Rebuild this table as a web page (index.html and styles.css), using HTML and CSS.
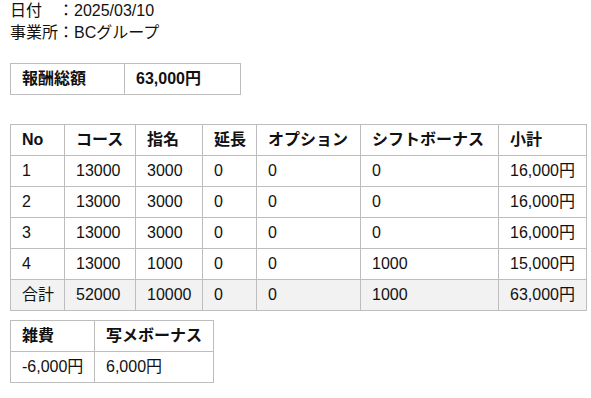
FILE: index.html
```html
<!DOCTYPE html>
<html lang="ja">
<head>
<meta charset="utf-8">
<link rel="stylesheet" href="styles.css">
</head>
<body>
<div class="page">
  <div class="info">
    <div class="line">日付　：2025/03/10</div>
    <div class="line">事業所：BCグループ</div>
  </div>

  <table class="grid total-table">
    <tr>
      <th class="tw1">報酬総額</th>
      <th class="tw2">63,000円</th>
    </tr>
  </table>

  <table class="grid main-table">
    <tr>
      <th class="c1">No</th>
      <th class="c2">コース</th>
      <th class="c3">指名</th>
      <th class="c4">延長</th>
      <th class="c5">オプション</th>
      <th class="c6">シフトボーナス</th>
      <th class="c7">小計</th>
    </tr>
    <tr><td>1</td><td>13000</td><td>3000</td><td>0</td><td>0</td><td>0</td><td class="num">16,000円</td></tr>
    <tr><td>2</td><td>13000</td><td>3000</td><td>0</td><td>0</td><td>0</td><td class="num">16,000円</td></tr>
    <tr><td>3</td><td>13000</td><td>3000</td><td>0</td><td>0</td><td>0</td><td class="num">16,000円</td></tr>
    <tr><td>4</td><td>13000</td><td>1000</td><td>0</td><td>0</td><td>1000</td><td class="num">15,000円</td></tr>
    <tr class="sum"><td>合計</td><td>52000</td><td>10000</td><td>0</td><td>0</td><td>1000</td><td class="num">63,000円</td></tr>
  </table>

  <table class="grid misc-table">
    <tr>
      <th class="m1">雑費</th>
      <th class="m2">写メボーナス</th>
    </tr>
    <tr>
      <td>-6,000円</td>
      <td>6,000円</td>
    </tr>
  </table>
</div>
</body>
</html>
```

FILE: styles.css
```css
html, body {
  margin: 0;
  padding: 0;
  background: #ffffff;
}

body {
  font-family: "Liberation Sans", "Noto Sans CJK JP", sans-serif;
  font-size: 16px;
  color: #111111;
}

.page {
  padding: 0 10px;
}

.info {
  display: flex;
  flex-direction: column;
}

.line {
  line-height: 22px;
  height: 22px;
}

.grid {
  border-collapse: collapse;
  table-layout: fixed;
}

.grid th,
.grid td {
  border: 1px solid #bdbdbd;
  padding: 0 11px;
  height: 30px;
  line-height: 20px;
  text-align: left;
  white-space: nowrap;
  box-sizing: border-box;
}

.grid th {
  font-weight: bold;
  height: 31px;
}

.total-table {
  margin-top: 19px;
  width: 230px;
}

.tw1 { width: 114px; }
.tw2 { width: 116px; }

.main-table {
  margin-top: 29px;
  width: 576px;
}

.c1 { width: 54px; }
.c2 { width: 71px; }
.c3 { width: 67px; }
.c4 { width: 54px; }
.c5 { width: 104px; }
.c6 { width: 138px; }
.c7 { width: 88px; }

.main-table td {
  height: 31px;
}

.grid td.num {
  text-align: right;
}

.sum td {
  background: #f2f2f2;
}

.misc-table {
  margin-top: 9px;
  width: 203px;
}

.m1 { width: 84px; }
.m2 { width: 119px; }

.misc-table td {
  height: 31px;
}
```
